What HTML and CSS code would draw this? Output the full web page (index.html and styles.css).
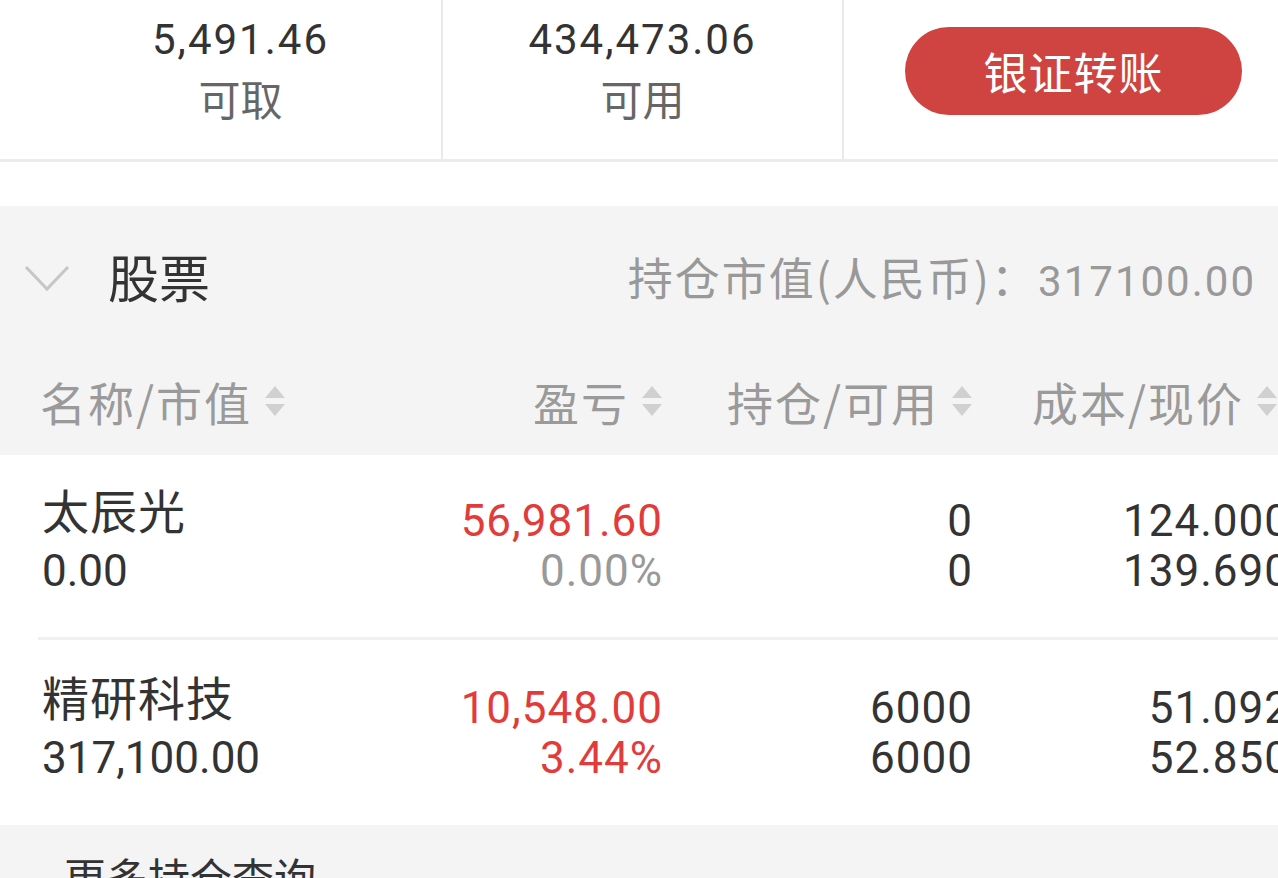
FILE: index.html
```html
<!DOCTYPE html>
<html lang="zh-CN">
<head>
  <meta charset="UTF-8" />
  <meta name="viewport" content="width=device-width, initial-scale=1.0" />
  <title>持仓</title>
  <link rel="stylesheet" href="styles.css">
</head>
<body>
  <div class="account">
    <div class="fund">
      <div class="fund-num">5,491.46</div>
      <div class="fund-label">可取</div>
    </div>
    <div class="fund">
      <div class="fund-num">434,473.06</div>
      <div class="fund-label">可用</div>
    </div>
    <div class="transfer">
      <button class="transfer-btn">银证转账</button>
    </div>
  </div>

  <section class="holdings">
    <div class="holdings-head">
      <svg class="chevron" width="48" height="30" viewBox="0 0 48 30">
        <polyline points="3,4 24,26 45,4" fill="none" stroke="#c6c6c6" stroke-width="3" />
      </svg>
      <span class="holdings-title">股票</span>
      <span class="holdings-total">持仓市值(人民币)：<span class="num">317100.00</span></span>
    </div>
    <div class="grid cols">
      <div class="col-name">名称/市值<svg class="sort" width="22" height="30" viewBox="0 0 22 30"><path d="M11 0 L21 12 H1 Z M11 30 L21 18 H1 Z" fill="#d0d0d0" /></svg></div>
      <div class="col-num">盈亏<svg class="sort" width="22" height="30" viewBox="0 0 22 30"><path d="M11 0 L21 12 H1 Z M11 30 L21 18 H1 Z" fill="#d0d0d0" /></svg></div>
      <div class="col-num">持仓/可用<svg class="sort" width="22" height="30" viewBox="0 0 22 30"><path d="M11 0 L21 12 H1 Z M11 30 L21 18 H1 Z" fill="#d0d0d0" /></svg></div>
      <div class="col-num col-last">成本/现价<svg class="sort" width="22" height="30" viewBox="0 0 22 30"><path d="M11 0 L21 12 H1 Z M11 30 L21 18 H1 Z" fill="#d0d0d0" /></svg></div>
    </div>
  </section>

  <div class="positions">
    <div class="grid row">
      <div class="cell-name">
        <div class="stock-name">太辰光</div>
        <div class="num">0.00</div>
      </div>
      <div class="cell-num">
        <div class="up">56,981.60</div>
        <div class="muted">0.00%</div>
      </div>
      <div class="cell-num">
        <div>0</div>
        <div>0</div>
      </div>
      <div class="cell-num">
        <div>124.000</div>
        <div>139.690</div>
      </div>
    </div>
    <div class="grid row">
      <div class="cell-name">
        <div class="stock-name">精研科技</div>
        <div class="num">317,100.00</div>
      </div>
      <div class="cell-num">
        <div class="up">10,548.00</div>
        <div class="up">3.44%</div>
      </div>
      <div class="cell-num">
        <div>6000</div>
        <div>6000</div>
      </div>
      <div class="cell-num">
        <div>51.092</div>
        <div>52.850</div>
      </div>
    </div>
  </div>

  <div class="more">更多持仓查询</div>
</body>
</html>
```

FILE: styles.css
```css
/* Reset & basic styling */
* {
  box-sizing: border-box;
  margin: 0;
  padding: 0;
}
body {
  font-family: 'Noto Sans CJK SC', 'Noto Sans', sans-serif;
  background: #fff;
  color: #333;
  width: 1278px;
  height: 878px;
  overflow: hidden;
}
.num {
  font-family: Roboto, 'Noto Sans CJK SC', sans-serif;
}

/* Account summary */
.account {
  display: grid;
  grid-template-columns: 443px 401px 1fr;
  height: 162px;
  border-bottom: 3px solid #ececec;
  margin-bottom: 44px;
}
.fund {
  display: flex;
  flex-direction: column;
  align-items: center;
  padding-left: 40px;
  padding-top: 12px;
  border-right: 2px solid #e9e9e9;
}
.fund + .fund {
  padding-left: 0;
}
.fund-num {
  font-family: Roboto, sans-serif;
  font-size: 42px;
  line-height: 56px;
  letter-spacing: 2px;
  color: #333;
}
.fund-label {
  font-size: 42px;
  line-height: 60px;
  color: #666;
}
.transfer {
  display: flex;
  align-items: flex-start;
  padding-top: 27px;
  padding-left: 61px;
}
.transfer-btn {
  width: 337px;
  height: 88px;
  border: none;
  border-radius: 44px;
  background: #cf4441;
  color: #fff;
  font-family: 'Noto Sans CJK SC', sans-serif;
  font-size: 44px;
  letter-spacing: 1px;
}

/* Holdings header */
.holdings {
  background: #f4f4f4;
  height: 249px;
}
.holdings-head {
  display: flex;
  align-items: center;
  height: 140px;
  padding: 0 22px 0 23px;
}
.chevron {
  margin-top: 4px;
}
.holdings-title {
  font-size: 51px;
  color: #333;
  margin-left: 37px;
}
.holdings-total {
  margin-left: auto;
  font-size: 45px;
  letter-spacing: 2px;
  color: #999;
}
.holdings-total .num {
  font-size: 42px;
  letter-spacing: 2px;
}

/* Column grid shared by header and rows */
.grid {
  display: grid;
  grid-template-columns: 389px 232px 310px 317px;
  width: 1290px;
  padding-left: 42px;
}
.cols {
  height: 109px;
  align-items: center;
  font-size: 46px;
  color: #9a9a9a;
}
.col-name {
  display: flex;
  align-items: center;
  margin-left: -2px;
  letter-spacing: 2px;
}
.col-num {
  display: flex;
  align-items: center;
  justify-content: flex-end;
  letter-spacing: 2px;
}
.col-last {
  padding-right: 12px;
}
.sort {
  margin-left: 12px;
}

/* Position rows */
.row {
  align-items: center;
  height: 185px;
  border-bottom: 3px solid #f0f0f0;
  margin-left: 38px;
  padding-left: 4px;
}
.row:last-child {
  border-bottom: none;
}
.cell-name {
  font-size: 44px;
  line-height: 62px;
  color: #333;
  margin-top: -12px;
}
.stock-name {
  font-size: 47px;
  letter-spacing: 1px;
}
.cell-num {
  font-family: Roboto, sans-serif;
  font-size: 44px;
  line-height: 50px;
  text-align: right;
  color: #333;
  letter-spacing: 1px;
}
.up {
  color: #e23c3a;
}
.muted {
  color: #999;
}

/* Footer link */
.more {
  background: #f4f4f4;
  height: 100px;
  padding: 20px 0 0 64px;
  font-size: 42px;
  color: #333;
}
```
